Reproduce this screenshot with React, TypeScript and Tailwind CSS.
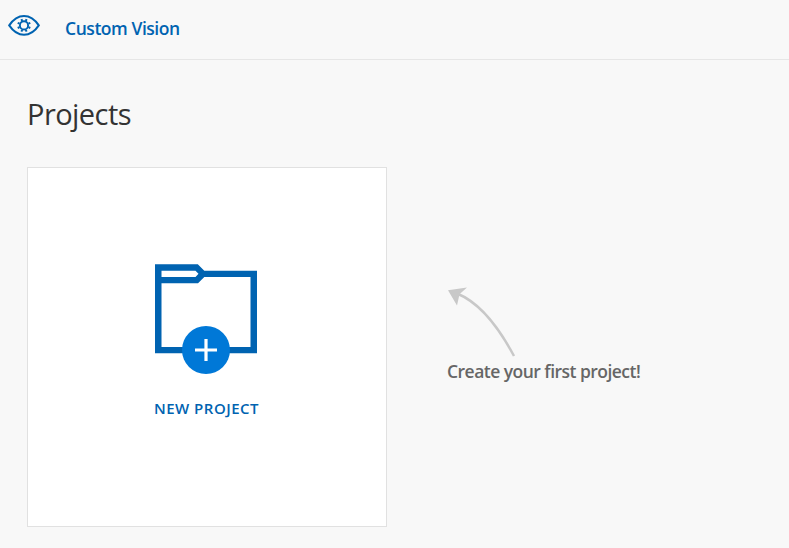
function EyeLogo() {
  return (
    <svg className="block h-[22px] w-8" viewBox="8 14 32 22" fill="none" stroke="#0063b1">
      <path d="M9.200 25.400Q15.500 16 24 16T38.800 25.400Q32.500 34.800 24 34.800T9.200 25.400Z" strokeWidth="2" />
      <circle cx="24" cy="25.400" r="4.100" strokeWidth="1.900" />
      <path
        d="M25.800 21L26.600 19.100M28.400 23.600L30.300 22.800M28.400 27.200L30.300 28M25.800 29.800L26.600 31.700M22.200 29.800L21.400 31.700M19.600 27.200L17.700 28M19.600 23.600L17.700 22.800M22.200 21L21.400 19.100"
        strokeWidth="2"
      />
    </svg>
  );
}

function FolderIcon() {
  return (
    <svg className="block h-[111px] w-[104px]" viewBox="154 263 104 111">
      <path
        fill="#0063b1"
        fillRule="evenodd"
        d="M155 264.200H197.800L204.300 270.700H257V353.300H155ZM161.500 270.700V277H195.500L198.500 273.800L195.500 270.700ZM161.500 283.300V347H250.500V277H204.300L198 283.300Z"
      />
      <circle cx="206" cy="350" r="24" fill="#0078d7" />
      <path d="M195 350H217M206 339V361" stroke="#fff" strokeWidth="3.200" />
    </svg>
  );
}

function Arrow() {
  return (
    <svg className="block h-[72px] w-[70px]" viewBox="447 286 70 72">
      <path d="M457 293.500Q487 305.500 514 356" fill="none" stroke="#c8c8c8" strokeWidth="2.500" />
      <path d="M448 290.300L467 287.500L459.500 294.200L457 305.500Z" fill="#c8c8c8" />
    </svg>
  );
}

export default function App() {
  return (
    <div className="h-[548px] w-[789px] overflow-hidden bg-[#f8f8f8] font-['Open_Sans','Noto_Sans',sans-serif]">
      <header className="flex h-[60px] items-start border-b border-[#e6e6e6] pl-2">
        <div className="pt-[14px]">
          <EyeLogo />
        </div>
        <span className="ml-[25px] mt-4 whitespace-nowrap text-[17.5px] leading-6 font-semibold tracking-[-0.45px] text-[#0063b1]">
          Custom Vision
        </span>
      </header>
      <main className="px-[27px] pt-[34px]">
        <h1 className="h-[73px] text-[29px] leading-10 font-normal tracking-[-0.55px] text-[#333]">Projects</h1>
        <div className="flex">
          <button className="flex h-[360px] w-[360px] flex-col items-center border border-[#e1e1e1] bg-white pt-[95px]">
            <div className="pr-[2px]">
              <FolderIcon />
            </div>
            <span className="mt-6 whitespace-nowrap pr-px text-[15px] leading-5 font-semibold tracking-[0.5px] text-[#0063b1]">
              NEW PROJECT
            </span>
          </button>
          <aside className="ml-[60px] flex flex-col pt-[119px]">
            <Arrow />
            <p className="mt-px whitespace-nowrap text-[17.5px] leading-6 font-semibold tracking-[-0.53px] text-[#666]">
              Create your first project!
            </p>
          </aside>
        </div>
      </main>
    </div>
  );
}
